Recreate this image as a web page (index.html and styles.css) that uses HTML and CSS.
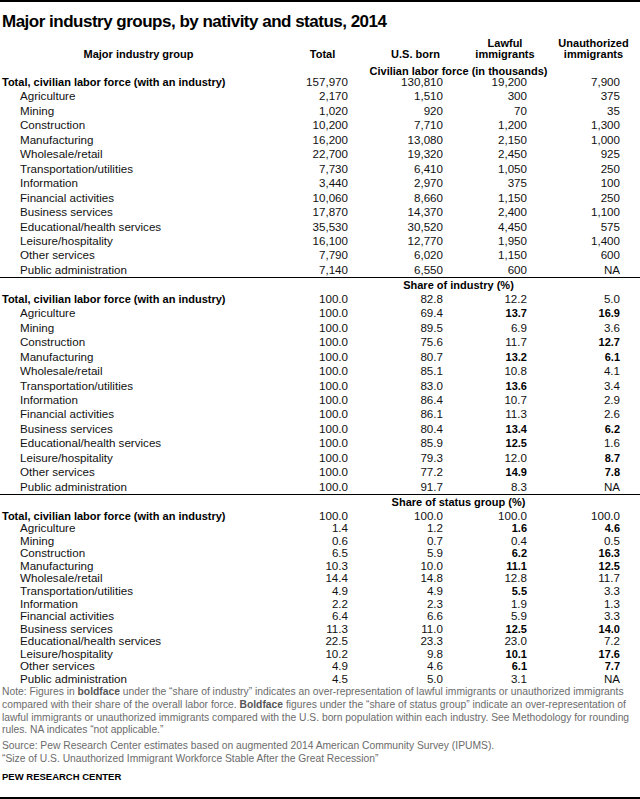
FILE: index.html
```html
<!DOCTYPE html>
<html lang="en">
<head>
    <meta charset="UTF-8">
    <meta name="viewport" content="width=device-width, initial-scale=1.0">
    <title>Major industry groups, by nativity and status, 2014</title>
    <link rel="stylesheet" href="styles.css">
</head>
<body>
    <div class="chart">
        <h1 class="title">Major industry groups, by nativity and status, 2014</h1>

        <table class="data">
            <colgroup>
                <col class="c-label">
                <col class="c-total">
                <col class="c-born">
                <col class="c-lawful">
                <col class="c-unauth">
            </colgroup>
            <thead>
                <tr class="head">
                    <th>Major industry group</th>
                    <th>Total</th>
                    <th>U.S. born</th>
                    <th>Lawful<br>immigrants</th>
                    <th>Unauthorized<br>immigrants</th>
                </tr>
            </thead>

            <!-- Civilian labor force -->
            <tbody class="sec sec-1">
                <tr class="section"><td></td><td colspan="4">Civilian labor force (in thousands)</td></tr>
                <tr class="total"><td>Total, civilian labor force (with an industry)</td><td>157,970</td><td>130,810</td><td>19,200</td><td>7,900</td></tr>
                <tr><td>Agriculture</td><td>2,170</td><td>1,510</td><td>300</td><td>375</td></tr>
                <tr><td>Mining</td><td>1,020</td><td>920</td><td>70</td><td>35</td></tr>
                <tr><td>Construction</td><td>10,200</td><td>7,710</td><td>1,200</td><td>1,300</td></tr>
                <tr><td>Manufacturing</td><td>16,200</td><td>13,080</td><td>2,150</td><td>1,000</td></tr>
                <tr><td>Wholesale/retail</td><td>22,700</td><td>19,320</td><td>2,450</td><td>925</td></tr>
                <tr><td>Transportation/utilities</td><td>7,730</td><td>6,410</td><td>1,050</td><td>250</td></tr>
                <tr><td>Information</td><td>3,440</td><td>2,970</td><td>375</td><td>100</td></tr>
                <tr><td>Financial activities</td><td>10,060</td><td>8,660</td><td>1,150</td><td>250</td></tr>
                <tr><td>Business services</td><td>17,870</td><td>14,370</td><td>2,400</td><td>1,100</td></tr>
                <tr><td>Educational/health services</td><td>35,530</td><td>30,520</td><td>4,450</td><td>575</td></tr>
                <tr><td>Leisure/hospitality</td><td>16,100</td><td>12,770</td><td>1,950</td><td>1,400</td></tr>
                <tr><td>Other services</td><td>7,790</td><td>6,020</td><td>1,150</td><td>600</td></tr>
                <tr class="last"><td>Public administration</td><td>7,140</td><td>6,550</td><td>600</td><td>NA</td></tr>
            </tbody>

            <!-- Share of industry -->
            <tbody class="sec sec-2">
                <tr class="section"><td></td><td colspan="4">Share of industry (%)</td></tr>
                <tr class="total"><td>Total, civilian labor force (with an industry)</td><td>100.0</td><td>82.8</td><td>12.2</td><td>5.0</td></tr>
                <tr><td>Agriculture</td><td>100.0</td><td>69.4</td><td class="hi">13.7</td><td class="hi">16.9</td></tr>
                <tr><td>Mining</td><td>100.0</td><td>89.5</td><td>6.9</td><td>3.6</td></tr>
                <tr><td>Construction</td><td>100.0</td><td>75.6</td><td>11.7</td><td class="hi">12.7</td></tr>
                <tr><td>Manufacturing</td><td>100.0</td><td>80.7</td><td class="hi">13.2</td><td class="hi">6.1</td></tr>
                <tr><td>Wholesale/retail</td><td>100.0</td><td>85.1</td><td>10.8</td><td>4.1</td></tr>
                <tr><td>Transportation/utilities</td><td>100.0</td><td>83.0</td><td class="hi">13.6</td><td>3.4</td></tr>
                <tr><td>Information</td><td>100.0</td><td>86.4</td><td>10.7</td><td>2.9</td></tr>
                <tr><td>Financial activities</td><td>100.0</td><td>86.1</td><td>11.3</td><td>2.6</td></tr>
                <tr><td>Business services</td><td>100.0</td><td>80.4</td><td class="hi">13.4</td><td class="hi">6.2</td></tr>
                <tr><td>Educational/health services</td><td>100.0</td><td>85.9</td><td class="hi">12.5</td><td>1.6</td></tr>
                <tr><td>Leisure/hospitality</td><td>100.0</td><td>79.3</td><td>12.0</td><td class="hi">8.7</td></tr>
                <tr><td>Other services</td><td>100.0</td><td>77.2</td><td class="hi">14.9</td><td class="hi">7.8</td></tr>
                <tr class="last"><td>Public administration</td><td>100.0</td><td>91.7</td><td>8.3</td><td>NA</td></tr>
            </tbody>

            <!-- Share of status group -->
            <tbody class="sec sec-3">
                <tr class="section"><td></td><td colspan="4">Share of status group (%)</td></tr>
                <tr class="total"><td>Total, civilian labor force (with an industry)</td><td>100.0</td><td>100.0</td><td>100.0</td><td>100.0</td></tr>
                <tr><td>Agriculture</td><td>1.4</td><td>1.2</td><td class="hi">1.6</td><td class="hi">4.6</td></tr>
                <tr><td>Mining</td><td>0.6</td><td>0.7</td><td>0.4</td><td>0.5</td></tr>
                <tr><td>Construction</td><td>6.5</td><td>5.9</td><td class="hi">6.2</td><td class="hi">16.3</td></tr>
                <tr><td>Manufacturing</td><td>10.3</td><td>10.0</td><td class="hi">11.1</td><td class="hi">12.5</td></tr>
                <tr><td>Wholesale/retail</td><td>14.4</td><td>14.8</td><td>12.8</td><td>11.7</td></tr>
                <tr><td>Transportation/utilities</td><td>4.9</td><td>4.9</td><td class="hi">5.5</td><td>3.3</td></tr>
                <tr><td>Information</td><td>2.2</td><td>2.3</td><td>1.9</td><td>1.3</td></tr>
                <tr><td>Financial activities</td><td>6.4</td><td>6.6</td><td>5.9</td><td>3.3</td></tr>
                <tr><td>Business services</td><td>11.3</td><td>11.0</td><td class="hi">12.5</td><td class="hi">14.0</td></tr>
                <tr><td>Educational/health services</td><td>22.5</td><td>23.3</td><td>23.0</td><td>7.2</td></tr>
                <tr><td>Leisure/hospitality</td><td>10.2</td><td>9.8</td><td class="hi">10.1</td><td class="hi">17.6</td></tr>
                <tr><td>Other services</td><td>4.9</td><td>4.6</td><td class="hi">6.1</td><td class="hi">7.7</td></tr>
                <tr><td>Public administration</td><td>4.5</td><td>5.0</td><td>3.1</td><td>NA</td></tr>
            </tbody>
        </table>

        <p class="note">Note: Figures in <b>boldface</b> under the “share of industry” indicates an over-representation of lawful immigrants or unauthorized immigrants<br>
        compared with their share of the overall labor force. <b>Boldface</b> figures under the “share of status group” indicate an over-representation of<br>
        lawful immigrants or unauthorized immigrants compared with the U.S. born population within each industry. See Methodology for rounding<br>
        rules. NA indicates “not applicable.”</p>
        <p class="note source">Source: Pew Research Center estimates based on augmented 2014 American Community Survey (IPUMS).<br>
        “Size of U.S. Unauthorized Immigrant Workforce Stable After the Great Recession”</p>

        <p class="brand">PEW RESEARCH CENTER</p>
    </div>
</body>
</html>
```

FILE: styles.css
```css
* {
    margin: 0;
    padding: 0;
    box-sizing: border-box;
}
body {
    font-family: "Liberation Sans", Arial, sans-serif;
    color: #000;
    background: #fff;
    width: 640px;
}
.chart {
    border-top: 2px solid #000;
    border-bottom: 2px solid #000;
    height: 799px;
}
.title {
    font-size: 17px;
    line-height: 22px;
    font-weight: bold;
    letter-spacing: -0.5px;
    margin: 9px 0 5px 2px;
    white-space: nowrap;
}

/* table */
.data {
    width: 640px;
    border-collapse: collapse;
    table-layout: fixed;
    font-size: 11px;
}
.c-label { width: 277px; }
.c-total { width: 91px; }
.c-born { width: 95px; }
.c-lawful { width: 84px; }
.c-unauth { width: 93px; }

.data td {
    padding: 0 20px 0 0;
    text-align: right;
    font-size: 11.6px;
    line-height: 14.45px;
    white-space: nowrap;
    color: #111;
}
.data td:first-child {
    text-align: left;
    padding: 0 0 0 20px;
}
.data .hi {
    font-weight: bold;
    font-size: 11px;
    color: #000;
}
.head th {
    font-weight: bold;
    line-height: 11px;
    text-align: center;
    vertical-align: bottom;
    padding-bottom: 7px;
    white-space: nowrap;
}
.data .section td {
    font-weight: bold;
    font-size: 11px;
    text-align: center;
    padding: 0;
    color: #000;
}
.data .total td:first-child {
    font-weight: bold;
    font-size: 11px;
    padding-left: 2px;
    color: #000;
}
.data .last td {
    border-bottom: 1px solid #000;
}
.data .sec-1 .section td { line-height: 8px; }
.data .sec-2 .section td { line-height: 12.5px; padding-top: 1px; }
.data .sec-3 .section td { line-height: 13.5px; padding-top: 1px; }
.data .sec-3 td { line-height: 12.54px; }

/* footnotes */
.note {
    font-size: 10.3px;
    line-height: 12.7px;
    color: #6b6b6b;
    padding-left: 2px;
    margin-top: 1px;
    white-space: nowrap;
}
.note b {
    color: #555;
}
.note.source {
    margin-top: 3px;
}
.brand {
    font-size: 9.5px;
    font-weight: bold;
    padding-left: 2px;
    margin-top: 5px;
}
```
